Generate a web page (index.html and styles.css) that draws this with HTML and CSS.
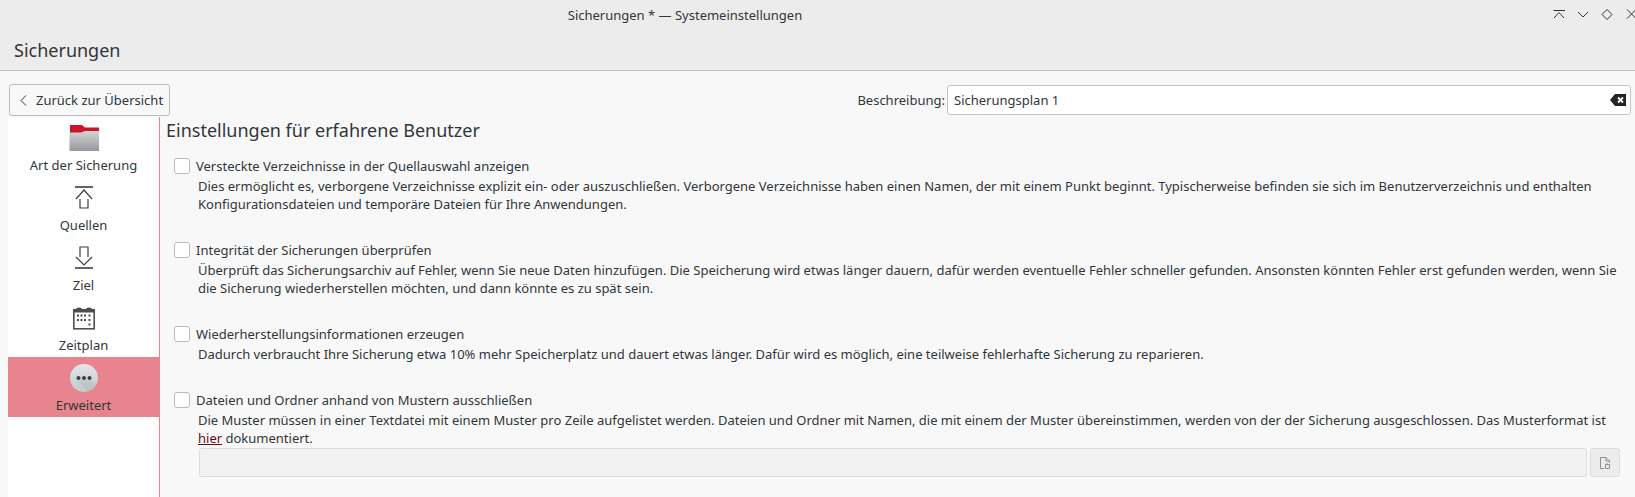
FILE: index.html
```html
<!DOCTYPE html>
<html lang="de">

<head>
    <meta charset="UTF-8">
    <title>Sicherungen * — Systemeinstellungen</title>
    <link rel="stylesheet" href="styles.css">
</head>

<body>
    <header class="titlebar">
        <div class="window-row">
            <span class="window-title">Sicherungen * — Systemeinstellungen</span>
            <div class="window-buttons">
                <svg class="win-icon" viewBox="0 0 14 12"><path d="M1.500 1.500h11.500M2 9l5-5.500L12 9"/></svg>
                <svg class="win-icon" viewBox="0 0 14 12"><path d="M2 3l5 5 5-5"/></svg>
                <svg class="win-icon" viewBox="0 0 14 12"><path d="M7 .5l5 5-5 5-5-5z"/></svg>
                <svg class="win-icon" viewBox="0 0 14 12"><path d="M3 .5l9 9M12 .5l-9 9"/></svg>
            </div>
        </div>
        <h1 class="page-title">Sicherungen</h1>
    </header>

    <div class="toolbar">
        <button class="back-btn">
            <svg class="back-icon" viewBox="0 0 7 11"><path d="M6 .5l-5 5 5 5"/></svg>
            Zurück zur Übersicht
        </button>
        <div class="desc-field">
            <label class="desc-label">Beschreibung:</label>
            <div class="desc-input">
                <span>Sicherungsplan 1</span>
                <svg class="clear-icon" viewBox="0 0 16 12">
                    <path d="M5 0h11v12H5L0 6z" fill="#232629"/>
                    <path d="M8 3.500l5 5M13 3.500l-5 5" stroke="#fff" stroke-width="1.8"/>
                </svg>
            </div>
        </div>
    </div>

    <div class="main">
        <ul class="sidebar">
            <li class="side-item">
                <svg class="side-icon" viewBox="0 0 32 32">
                    <defs>
                        <linearGradient id="folderGrad" x1="0" y1="0" x2="0" y2="1">
                            <stop offset="0" stop-color="#d6d7d9"/>
                            <stop offset="1" stop-color="#96989c"/>
                        </linearGradient>
                    </defs>
                    <path d="M1.500 11h12l4-2h13.500v21H1.500z" fill="url(#folderGrad)"/>
                    <path d="M2 4h12l3 2.500h14v3.500H17l-4 1.500H2z" fill="#c9152a"/>
                </svg>
                <span>Art der Sicherung</span>
            </li>
            <li class="side-item">
                <svg class="side-icon line-icon" viewBox="0 0 32 32">
                    <path d="M7 6h18" stroke-width="1.6"/>
                    <path d="M8 18l8-9 8 9M12 18v9h8v-9"/>
                </svg>
                <span>Quellen</span>
            </li>
            <li class="side-item">
                <svg class="side-icon line-icon" viewBox="0 0 32 32">
                    <path d="M12 16V6h8v10M8 16l8 8 8-8"/>
                    <path d="M7 27h18" stroke-width="1.6"/>
                </svg>
                <span>Ziel</span>
            </li>
            <li class="side-item">
                <svg class="side-icon" viewBox="0 0 32 32">
                    <rect x="5.800" y="9" width="20.400" height="18.800" fill="none" stroke="#4d4d4d" stroke-width="1.6"/>
                    <path d="M5 8h22v3.500H5z" fill="#4d4d4d"/>
                    <path d="M8 8.500a3 2 0 0 1 6 0zM18 8.500a3 2 0 0 1 6 0z" fill="#4d4d4d"/>
                    <path d="M9 13.500h2v2H9zM12.500 13.500h2v2h-2zM16 13.500h2v2h-2zM20.500 13.500h2v2h-2zM9 18h2v2H9zM12.500 18h2v2h-2zM16 18h2v2h-2zM20.500 18h2v2h-2zM20.500 22.500h2v2h-2z" fill="#4d4d4d"/>
                </svg>
                <span>Zeitplan</span>
            </li>
            <li class="side-item selected">
                <svg class="side-icon" viewBox="0 0 32 32">
                    <defs>
                        <linearGradient id="moreGrad" x1="0" y1="0" x2="0" y2="1">
                            <stop offset="0" stop-color="#e4e6e8"/>
                            <stop offset="1" stop-color="#c3c7cb"/>
                        </linearGradient>
                    </defs>
                    <circle cx="16" cy="17" r="14" fill="url(#moreGrad)"/>
                    <path d="M9 19h14l6.500 5A14 14 0 0 1 20 30.400z" fill="#aeb3b8" opacity=".35"/>
                    <circle cx="10.500" cy="17" r="2" fill="#3b4045"/>
                    <circle cx="16" cy="17" r="2" fill="#3b4045"/>
                    <circle cx="21.500" cy="17" r="2" fill="#3b4045"/>
                </svg>
                <span>Erweitert</span>
            </li>
        </ul>

        <section class="content">
            <h2 class="heading">Einstellungen für erfahrene Benutzer</h2>

            <div class="option">
                <label class="check-row"><span class="checkbox"></span>Versteckte Verzeichnisse in der Quellauswahl anzeigen</label>
                <p class="option-text">Dies ermöglicht es, verborgene Verzeichnisse explizit ein- oder auszuschließen. Verborgene Verzeichnisse haben einen Namen, der mit einem Punkt beginnt. Typischerweise befinden sie sich im Benutzerverzeichnis und enthalten Konfigurationsdateien und temporäre Dateien für Ihre Anwendungen.</p>
            </div>

            <div class="option">
                <label class="check-row"><span class="checkbox"></span>Integrität der Sicherungen überprüfen</label>
                <p class="option-text">Überprüft das Sicherungsarchiv auf Fehler, wenn Sie neue Daten hinzufügen. Die Speicherung wird etwas länger dauern, dafür werden eventuelle Fehler schneller gefunden. Ansonsten könnten Fehler erst gefunden werden, wenn Sie die Sicherung wiederherstellen möchten, und dann könnte es zu spät sein.</p>
            </div>

            <div class="option">
                <label class="check-row"><span class="checkbox"></span>Wiederherstellungsinformationen erzeugen</label>
                <p class="option-text">Dadurch verbraucht Ihre Sicherung etwa 10% mehr Speicherplatz und dauert etwas länger. Dafür wird es möglich, eine teilweise fehlerhafte Sicherung zu reparieren.</p>
            </div>

            <div class="option">
                <label class="check-row"><span class="checkbox"></span>Dateien und Ordner anhand von Mustern ausschließen</label>
                <p class="option-text">Die Muster müssen in einer Textdatei mit einem Muster pro Zeile aufgelistet werden. Dateien und Ordner mit Namen, die mit einem der Muster übereinstimmen, werden von der der Sicherung ausgeschlossen. Das Musterformat ist <a class="doc-link" href="#">hier</a> dokumentiert.</p>
                <div class="pattern-row">
                    <div class="pattern-input"></div>
                    <div class="file-btn">
                        <svg class="file-icon" viewBox="0 0 10 12"><path d="M4 11.500H.5V.5H6L9.500 4v2M6 .5V4h3.500M5.500 7.500h4v4h-4zM7 6v1.500"/></svg>
                    </div>
                </div>
            </div>
        </section>
    </div>
</body>

</html>
```

FILE: styles.css
```css
* {
    margin: 0;
    padding: 0;
    box-sizing: border-box;
}

ul {
    list-style: none;
}

html,
body {
    height: 497px;
    overflow: hidden;
}

body {
    display: flex;
    flex-direction: column;
    background: #f8f8f8;
    color: #31363b;
    font-family: "Noto Sans", sans-serif;
    font-size: 13px;
}

.titlebar {
    height: 71px;
    background: #ececec;
    border-bottom: 1px solid #c2c3c4;
    flex: none;
}

.window-row {
    height: 29px;
    position: relative;
    display: flex;
    align-items: center;
    justify-content: center;
    padding-right: 265px;
}

.window-buttons {
    position: absolute;
    top: 9px;
    left: 1552px;
    display: flex;
    gap: 10px;
}

.win-icon {
    width: 14px;
    height: 12px;
    fill: none;
    stroke: #31363b;
    stroke-width: 1;
    flex: none;
}

.page-title {
    font-size: 18px;
    font-weight: 400;
    line-height: 24px;
    padding: 9px 0 0 14px;
}

.toolbar {
    display: flex;
    align-items: center;
    justify-content: space-between;
    padding: 13px 4px 1px 9px;
    flex: none;
}

.back-btn {
    width: 161px;
    height: 32px;
    display: flex;
    align-items: center;
    gap: 9px;
    padding-left: 10px;
    background: #f8f8f8;
    border: 1px solid #bcbdbe;
    border-radius: 3px;
    color: #31363b;
    font: inherit;
    white-space: nowrap;
}

.back-icon {
    width: 7px;
    height: 11px;
    fill: none;
    stroke: #31363b;
}

.desc-field {
    display: flex;
    align-items: center;
    gap: 2px;
}

.desc-input {
    width: 684px;
    height: 30px;
    display: flex;
    align-items: center;
    justify-content: space-between;
    padding: 0 4px 0 6px;
    background: #fff;
    border: 1px solid #c4c5c6;
    border-radius: 3px;
}

.clear-icon {
    width: 16px;
    height: 12px;
}

.main {
    flex: 1;
    display: flex;
    min-height: 0;
}

.sidebar {
    width: 152px;
    margin-left: 8px;
    background: #fff;
    border-right: 1px solid #e7848d;
    flex: none;
}

.side-item {
    height: 60px;
    display: flex;
    flex-direction: column;
    align-items: center;
    padding-top: 4px;
    line-height: 18px;
}

.side-item.selected {
    background: #e7848d;
}

.side-icon {
    width: 32px;
    height: 32px;
    margin-bottom: 3px;
}

.line-icon {
    fill: none;
    stroke: #3a3f44;
    stroke-width: 1.2;
}

.content {
    flex: 1;
    padding: 0 15px 0 6px;
}

.heading {
    font-size: 18px;
    font-weight: 400;
    line-height: 24px;
    margin-top: 1px;
    margin-bottom: 16px;
}

.option {
    margin-bottom: 29px;
    padding-left: 8px;
}

.check-row {
    display: flex;
    align-items: center;
    gap: 6px;
    height: 22px;
    margin-top: -3px;
}

.checkbox {
    width: 16px;
    height: 16px;
    background: #fff;
    border: 1px solid #bcbdbe;
    border-radius: 3px;
    flex: none;
}

.option-text {
    padding-left: 24px;
    line-height: 18px;
}

.doc-link {
    color: #6e0b0b;
}

.pattern-row {
    display: flex;
    gap: 3px;
    margin: 1px 0 0 25px;
}

.pattern-input {
    flex: 1;
    height: 29px;
    background: #f2f2f2;
    border: 1px solid #dcdcdc;
    border-radius: 3px;
}

.file-btn {
    width: 30px;
    height: 29px;
    display: flex;
    align-items: center;
    justify-content: center;
    background: #ececec;
    border: 1px solid #dcdcdc;
    border-radius: 3px;
}

.file-icon {
    width: 10px;
    height: 12px;
    fill: none;
    stroke: #8d8f91;
}
```
